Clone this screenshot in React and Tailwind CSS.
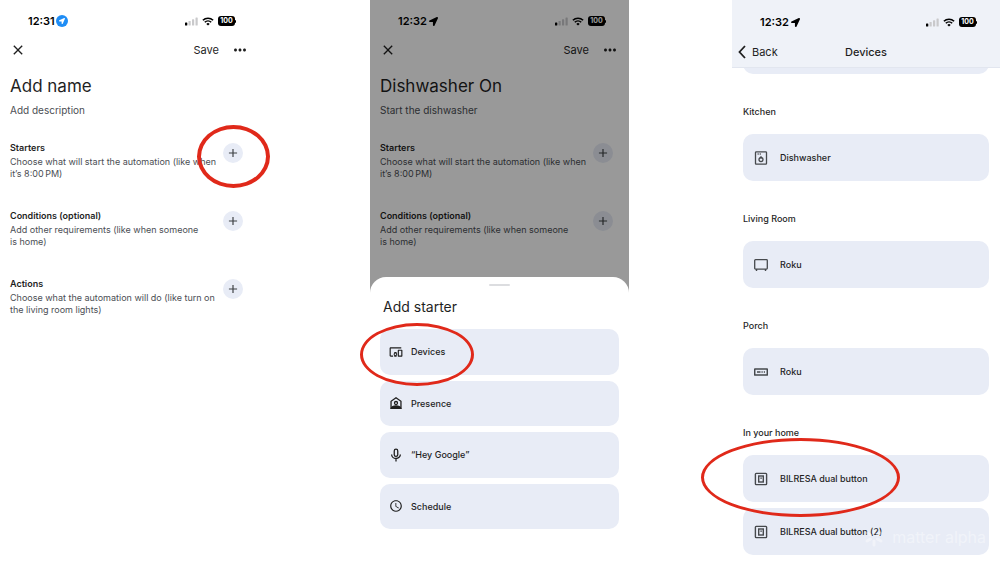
import React from 'react';
import { FaLocationArrow } from 'react-icons/fa';
import { MdAdd, MdClose, MdMoreHoriz, MdDevicesOther, MdSchedule } from 'react-icons/md';

const starterLines = ['Choose what will start the automation (like when', 'it’s 8:00\u2009PM)'];
const conditionLines = ['Add other requirements (like when someone', 'is home)'];
const actionLines = ['Choose what the automation will do (like turn on', 'the living room lights)'];

const PresenceIcon = () => (
    <svg viewBox="0 0 24 24" className="w-3.5 h-3.5" fill="none" stroke="currentColor" strokeWidth="2.2">
        <path d="M3.5 21V9L12 3l8.5 6v12z" />
        <circle cx="12" cy="12" r="2.6" />
        <path d="M4 21c1-3 4-4 8-4s7 1 8 4z" fill="currentColor" />
    </svg>
);

const MicIcon = () => (
    <svg viewBox="0 0 24 24" className="w-3.5 h-3.5" fill="none" stroke="currentColor" strokeWidth="2.2">
        <rect x="9" y="2" width="6" height="12.5" rx="3" />
        <path d="M4.5 11a7.5 7 0 0 0 15 0M12 18v5" />
    </svg>
);

const WasherIcon = () => (
    <svg viewBox="0 0 14 14" className="w-3.5 h-3.5" fill="none" stroke="currentColor" strokeWidth="1.3">
        <rect x="1.5" y="0.8" width="11" height="12.4" rx="0.8" />
        <circle cx="7" cy="8.6" r="2" />
        <path d="M7 4.8 5 7.5h4z" fill="currentColor" stroke="none" />
        <path d="M3.6 3h1.1M5.7 3h1.1" />
    </svg>
);

const TvIcon = () => (
    <svg viewBox="0 0 14 14" className="w-3.5 h-3.5" fill="none" stroke="currentColor" strokeWidth="1.3">
        <rect x="0.7" y="1.7" width="12.6" height="9.4" rx="0.8" />
        <path d="M2.5 11v1.9M11.5 11v1.9" strokeWidth="1.4" />
    </svg>
);

const StreamerIcon = () => (
    <svg viewBox="0 0 14 14" className="w-3.5 h-3.5" fill="none" stroke="currentColor" strokeWidth="1.5">
        <rect x="0.7" y="3.9" width="12.6" height="6.2" rx="0.3" />
        <path d="M3 7h3.5M7.5 7h1.2M9.8 7h1.2" />
    </svg>
);

const SwitchIcon = () => (
    <svg viewBox="0 0 14 14" className="w-3.5 h-3.5" fill="none" stroke="currentColor" strokeWidth="1.4">
        <rect x="1.4" y="1.4" width="11.2" height="11.2" rx="0.8" />
        <rect x="4.7" y="4" width="4.6" height="6" />
        <path d="M6.3 6.2h1.6" strokeWidth="1.2" />
    </svg>
);

// Hand drawn highlight around a control
const Ring = ({ className }) => (
    <span className={`absolute z-20 rounded-[50%] border-[#e0291a] pointer-events-none ${className}`}></span>
);

const StatusBar = ({ time, badge = false }) => (
    <div className="flex items-center h-4 pl-7 pr-[23px] text-black">
        <span className="text-[11px] leading-4 font-semibold">{time}</span>
        {badge ? (
            <span className="flex items-center justify-center w-3 h-3 ml-px rounded-full bg-[#1f8df5]">
                <FaLocationArrow className="w-1.5 h-1.5 text-white" />
            </span>
        ) : (
            <FaLocationArrow className="w-[9px] h-[9px] ml-0.5" />
        )}
        <svg viewBox="0 0 13 9" className="w-[13px] h-[9px] ml-auto">
            <rect x="0" y="5.5" width="2.3" height="3" rx="0.6" fill="currentColor" />
            <rect x="3.5" y="4" width="2.2" height="4.5" rx="0.6" fill="#c9c9cb" />
            <rect x="7" y="2.3" width="2.2" height="6.2" rx="0.6" fill="#c9c9cb" />
            <rect x="10.5" y="0.5" width="2.2" height="8" rx="0.6" fill="#c9c9cb" />
        </svg>
        <svg viewBox="0 0 12 9" className="w-3 h-[9px] ml-1" fill="none" stroke="currentColor" strokeWidth="1.6">
            <path d="M0.9 3.3a7.3 7.3 0 0 1 10.2 0M2.8 5.3a4.6 4.6 0 0 1 6.4 0" />
            <path d="M6 8.6 4.3 6.9a2.5 2.5 0 0 1 3.4 0z" fill="currentColor" stroke="none" />
        </svg>
        <span className="flex items-center ml-1">
            <span className="w-[17px] h-[10px] rounded-[3px] bg-black text-white text-center text-[7px] leading-[10px] font-bold">100</span>
            <span className="w-px h-[3px] rounded-r bg-black"></span>
        </span>
    </div>
);

const Section = ({ title, lines, ringed = false }) => (
    <section className="flex items-start justify-between">
        <div className="text-[9px] leading-3 whitespace-nowrap">
            <h2 className="font-semibold text-[#1f1f1f]">{title}</h2>
            <p className="mt-0.5 text-[#4b4e54]">
                {lines[0]}
                <br />
                {lines[1]}
            </p>
        </div>
        <div className="relative mt-px">
            <button aria-label={`Add ${title}`} className="flex items-center justify-center w-5 h-5 rounded-full bg-[#e8ecf6] text-[#3c4043]">
                <MdAdd className="w-3.5 h-3.5" />
            </button>
            {ringed && <Ring className="-left-[26px] -top-[18px] w-[73px] h-[63px] border-4" />}
        </div>
    </section>
);

const Editor = ({ time, badge, title, description, children }) => (
    <div className="pt-[13px]">
        <StatusBar time={time} badge={badge} />
        <div className="flex items-center h-6 mt-[9px] px-2.5 text-[#1f1f1f]">
            <button aria-label="Close">
                <MdClose className="w-4 h-4" />
            </button>
            <button className="ml-auto text-[11px] leading-4">Save</button>
            <button aria-label="More options" className="ml-3">
                <MdMoreHoriz className="w-[18px] h-[18px]" />
            </button>
        </div>
        <div className="pl-2.5 pr-4">
            <h1 className="mt-3 text-[17px] leading-6 text-[#1f1f1f]">{title}</h1>
            <p className="mt-1 text-[10px] leading-4 text-[#4b4e54]">{description}</p>
            <div className="flex flex-col gap-[30px] mt-6">{children}</div>
        </div>
    </div>
);

const StarterCard = ({ icon, label, children }) => (
    <div className="relative">
        <button className="flex items-center w-full h-full gap-2 pl-[9px] rounded-[10px] bg-[#e8ecf6] text-[9px] font-medium text-[#1f1f1f]">
            {icon}
            {label}
        </button>
        {children}
    </div>
);

const DeviceCard = ({ icon, label, children }) => (
    <div className="relative">
        <button className="flex items-center w-full h-[47px] gap-3 pl-[11px] rounded-[10px] bg-[#e8ecf6] text-[9px] font-medium text-[#1f1f1f]">
            <span className="text-[#46494d]">{icon}</span>
            {label}
        </button>
        {children}
    </div>
);

const Room = ({ name, children }) => (
    <section>
        <h2 className="text-[9px] leading-4 font-medium text-[#1f1f1f]">{name}</h2>
        <div className="flex flex-col gap-1.5 mt-3.5">{children}</div>
    </section>
);

const Watermark = () => (
    <div className="absolute right-3.5 bottom-4 z-10 flex items-center gap-2 text-white/40 pointer-events-none">
        <svg viewBox="0 0 20 20" className="w-5 h-5" fill="none" stroke="currentColor" strokeWidth="3" strokeLinecap="round">
            <path d="M10 2v4M3 6l3.5 2M17 6l-3.5 2M3 14l3.5-2M17 14l-3.5-2M10 14v4" />
        </svg>
        <span className="text-[16px] leading-5 whitespace-nowrap">matter alpha</span>
    </div>
);

const App = () => {
    return (
        <main
            className="grid grid-cols-[259fr_111fr_259fr_103fr_268fr] bg-white overflow-hidden"
            style={{ fontFamily: 'Inter, "Liberation Sans", sans-serif' }}
        >
            {/* New automation */}
            <div className="col-start-1 min-w-0">
                <Editor time="12:31" badge title="Add name" description="Add description">
                    <Section title="Starters" lines={starterLines} ringed />
                    <Section title="Conditions (optional)" lines={conditionLines} />
                    <Section title="Actions" lines={actionLines} />
                </Editor>
            </div>

            {/* Starter picker */}
            <div className="col-start-3 min-w-0">
                <div className="relative pb-[45px]">
                    <Editor time="12:32" title="Dishwasher On" description="Start the dishwasher">
                        <Section title="Starters" lines={starterLines} />
                        <Section title="Conditions (optional)" lines={conditionLines} />
                    </Editor>
                    <div className="absolute inset-0 bg-black/40"></div>
                </div>
                <div className="relative -mt-4 px-2.5 pt-[7px] rounded-t-2xl bg-white">
                    <div className="w-[21px] h-0.5 mx-auto rounded-full bg-[#dcdde0]"></div>
                    <h2 className="mt-[11px] pl-[3px] text-[14px] leading-5 text-[#1f1f1f]">Add starter</h2>
                    <div className="grid grid-rows-4 gap-1.5 h-[200px] mt-3">
                        <StarterCard icon={<MdDevicesOther className="w-3.5 h-3.5" />} label="Devices">
                            <Ring className="-left-5 -top-1.5 w-[114px] h-[63px] border-[3px]" />
                        </StarterCard>
                        <StarterCard icon={<PresenceIcon />} label="Presence" />
                        <StarterCard icon={<MicIcon />} label="“Hey Google”" />
                        <StarterCard icon={<MdSchedule className="w-3.5 h-3.5" />} label="Schedule" />
                    </div>
                </div>
            </div>

            {/* Device list */}
            <div className="relative col-start-5 min-w-0 pb-2">
                <header className="relative z-10 pt-3.5 pb-[5px] bg-[#eff2f8] shadow-[0_1px_0_#e2e6ef]">
                    <StatusBar time="12:32" />
                    <div className="grid grid-cols-[1fr_auto_1fr] items-center h-5 mt-3 px-1.5 text-[11px] leading-4 text-[#1f1f1f]">
                        <button className="flex items-center gap-1.5">
                            <svg viewBox="0 0 8 14" className="w-2 h-3.5" fill="none" stroke="currentColor" strokeWidth="1.8">
                                <path d="M7 1 1.5 7 7 13" />
                            </svg>
                            Back
                        </button>
                        <h1 className="font-medium">Devices</h1>
                    </div>
                </header>
                <div className="flex flex-col gap-[30px] -mt-10 px-[11px]">
                    <div className="h-[47px] rounded-[10px] bg-[#e8ecf6]"></div>
                    <Room name="Kitchen">
                        <DeviceCard icon={<WasherIcon />} label="Dishwasher" />
                    </Room>
                    <Room name="Living Room">
                        <DeviceCard icon={<TvIcon />} label="Roku" />
                    </Room>
                    <Room name="Porch">
                        <DeviceCard icon={<StreamerIcon />} label="Roku" />
                    </Room>
                    <Room name="In your home">
                        <DeviceCard icon={<SwitchIcon />} label="BILRESA dual button">
                            <Ring className="-left-[42px] -top-[17px] w-[199px] h-[79px] border-[3px]" />
                        </DeviceCard>
                        <DeviceCard icon={<SwitchIcon />} label="BILRESA dual button (2)" />
                    </Room>
                </div>
                <Watermark />
            </div>
        </main>
    );
};

export default App;
